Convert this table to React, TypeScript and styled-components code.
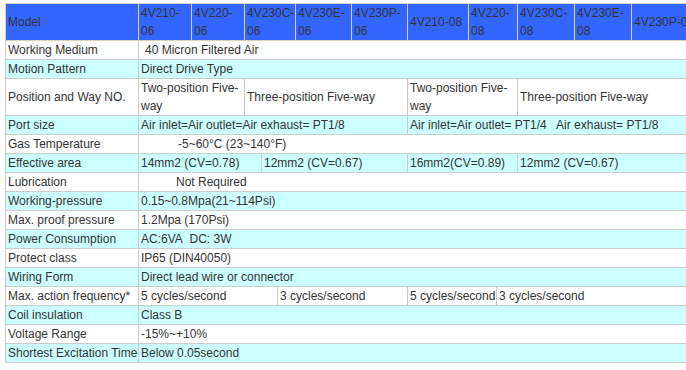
import styled, { createGlobalStyle } from "styled-components";

const GlobalStyle = createGlobalStyle`
    html, body {
        margin: 0;
        padding: 0;
        overflow: hidden;
        background: #ffffff;
    }
    body {
        padding: 3px 0 0 5px;
        font-family: "Liberation Sans", Arial, sans-serif;
    }
`;

const Table = styled.table`
    border-collapse: collapse;
    table-layout: fixed;
    width: 700px;
    font-size: 12px;
    line-height: 18px;
    color: #333333;
`;

const Col = styled.col<{ $w: number }>`
    width: ${(p) => p.$w}px;
`;

const Row = styled.tr<{ $alt?: boolean; $head?: boolean }>`
    background-color: ${(p) => (p.$head ? "#3366ff" : p.$alt ? "#ccffff" : "#ffffff")};
`;

const Cell = styled.td<{ $indent?: number }>`
    border: 1px solid #cccccc;
    padding: 0 0 0 ${(p) => 2 + (p.$indent ?? 0)}px;
    vertical-align: middle;
    white-space: normal;
    overflow: hidden;
`;

const LabelCell = styled(Cell)`
    white-space: nowrap;
`;

const HeadCell = styled(Cell)`
    border-color: #d8d0c0;
`;

// label column + 13 narrow data columns (models share some via colspan)
const widths = [133, 53, 53, 17, 16, 18, 56, 56, 61, 28, 21, 57, 57, 74];

const models: [string, number][] = [
    ["4V210-06", 1],
    ["4V220-06", 1],
    ["4V230C-06", 3],
    ["4V230E-06", 1],
    ["4V230P-06", 1],
    ["4V210-08", 1],
    ["4V220-08", 2],
    ["4V230C-08", 1],
    ["4V230E-08", 1],
    ["4V230P-08", 1],
];

type Value = { text: string; span: number; indent?: number };

const rows: { label: string; values: Value[] }[] = [
    { label: "Working Medium", values: [{ text: "40 Micron Filtered Air", span: 13, indent: 4 }] },
    { label: "Motion Pattern", values: [{ text: "Direct Drive Type", span: 13 }] },
    {
        label: "Position and Way NO.",
        values: [
            { text: "Two-position Five-way", span: 2 },
            { text: "Three-position Five-way", span: 5 },
            { text: "Two-position Five-way", span: 3 },
            { text: "Three-position Five-way", span: 3 },
        ],
    },
    {
        label: "Port size",
        values: [
            { text: "Air inlet=Air outlet=Air exhaust= PT1/8", span: 7 },
            { text: "Air inlet=Air outlet= PT1/4\u00a0\u00a0 Air exhaust= PT1/8", span: 6 },
        ],
    },
    { label: "Gas Temperature", values: [{ text: "-5~60°C (23~140°F)", span: 13, indent: 37 }] },
    {
        label: "Effective area",
        values: [
            { text: "14mm2 (CV=0.78)", span: 3 },
            { text: "12mm2 (CV=0.67)", span: 4 },
            { text: "16mm2(CV=0.89)", span: 3 },
            { text: "12mm2 (CV=0.67)", span: 3 },
        ],
    },
    { label: "Lubrication", values: [{ text: "Not Required", span: 13, indent: 35 }] },
    { label: "Working-pressure", values: [{ text: "0.15~0.8Mpa(21~114Psi)", span: 13 }] },
    { label: "Max. proof pressure", values: [{ text: "1.2Mpa (170Psi)", span: 13 }] },
    { label: "Power Consumption", values: [{ text: "AC:6VA\u00a0 DC: 3W", span: 13 }] },
    { label: "Protect class", values: [{ text: "IP65 (DIN40050)", span: 13 }] },
    { label: "Wiring Form", values: [{ text: "Direct lead wire or connector", span: 13 }] },
    {
        label: "Max. action frequency*",
        values: [
            { text: "5 cycles/second", span: 4 },
            { text: "3 cycles/second", span: 3 },
            { text: "5 cycles/second", span: 2 },
            { text: "3 cycles/second", span: 4 },
        ],
    },
    { label: "Coil insulation", values: [{ text: "Class B", span: 13 }] },
    { label: "Voltage Range", values: [{ text: "-15%~+10%", span: 13 }] },
    { label: "Shortest Excitation Time", values: [{ text: "Below 0.05second", span: 13 }] },
];

function App() {
    return (
        <>
            <GlobalStyle />
            <Table>
                <colgroup>
                    {widths.map((w, i) => (
                        <Col key={i} $w={w} />
                    ))}
                </colgroup>
                <tbody>
                    <Row $head>
                        <HeadCell>Model</HeadCell>
                        {models.map(([name, span]) => (
                            <HeadCell key={name} colSpan={span}>
                                {name}
                            </HeadCell>
                        ))}
                    </Row>
                    {rows.map((row, i) => (
                        <Row key={row.label} $alt={i % 2 === 1}>
                            <LabelCell>{row.label}</LabelCell>
                            {row.values.map((v, j) => (
                                <Cell key={j} colSpan={v.span} $indent={v.indent}>
                                    {v.text}
                                </Cell>
                            ))}
                        </Row>
                    ))}
                </tbody>
            </Table>
        </>
    );
}

export default App;
